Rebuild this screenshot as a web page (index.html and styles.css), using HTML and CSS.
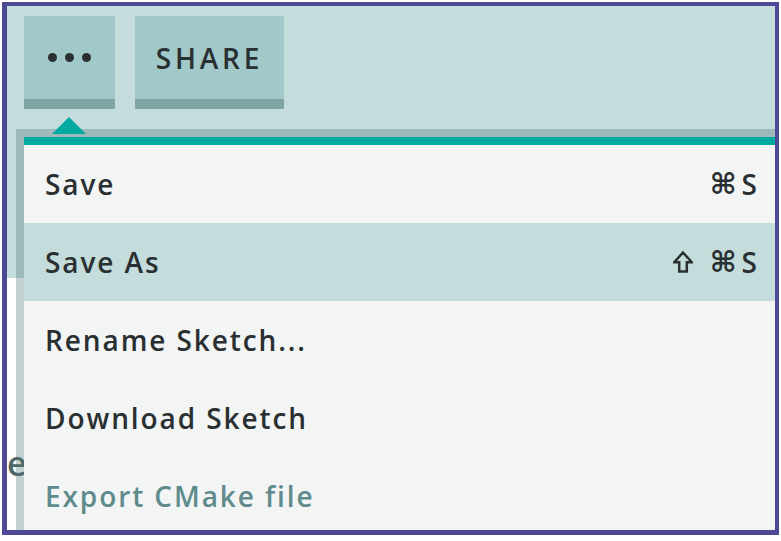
FILE: index.html
```html
<!DOCTYPE html>
<html lang="en">
<head>
<meta charset="utf-8">
<title>Sketch menu</title>
<link rel="stylesheet" href="styles.css">
</head>
<body>
<div class="frame">
  <div class="app">
    <div class="toolbar">
      <button class="tb-btn tb-more" aria-label="More">
        <span class="dot"></span><span class="dot"></span><span class="dot"></span>
      </button>
      <button class="tb-btn tb-share">SHARE</button>
    </div>
    <div class="editor">
      <span class="editor-text">e</span>
    </div>

    <span class="caret"></span>
    <div class="menu">
      <ul class="menu-list">
        <li class="menu-item"><span class="label">Save</span><span class="keys"><span class="key key-cmd">⌘</span><span class="key">S</span></span></li>
        <li class="menu-item is-active"><span class="label">Save As</span><span class="keys"><svg class="key-shift" width="20" height="22" viewBox="0 0 20 22" aria-label="Shift"><path d="M10 1.5 L18.8 11.2 H13.8 V20.6 H6.2 V11.2 H1.2 Z" fill="none" stroke="#2a3032" stroke-width="2.5" stroke-linejoin="miter"/></svg><span class="key key-cmd">⌘</span><span class="key">S</span></span></li>
        <li class="menu-item"><span class="label">Rename Sketch...</span></li>
        <li class="menu-item"><span class="label">Download Sketch</span></li>
        <li class="menu-item is-disabled"><span class="label">Export CMake file</span></li>
      </ul>
    </div>
  </div>
</div>
</body>
</html>
```

FILE: styles.css
```css
* { box-sizing: border-box; }

html, body {
  margin: 0;
  padding: 0;
  background: #ffffff;
}

body {
  font-family: "Open Sans", "DejaVu Sans", sans-serif;
}

.frame {
  margin: 2px 2px 6px 2px;
  width: 777px;
  height: 533px;
  border: 4px solid #4e4995;
  border-left-width: 5px;
  border-bottom-width: 5px;
  overflow: hidden;
}

.app {
  position: relative;
  height: 100%;
  display: flex;
  flex-direction: column;
  overflow: hidden;
}

.toolbar {
  height: 272px;
  flex: none;
  background: #c4dcdc;
  display: flex;
  align-items: flex-start;
  gap: 20px;
  padding: 10px 0 0 17px;
}

.tb-btn {
  font: inherit;
  margin: 0;
  height: 93px;
  border: 0;
  border-bottom: 10px solid #80a4a4;
  background: #a2c9c9;
  display: flex;
  align-items: center;
  justify-content: center;
  padding: 0;
  color: #2a3032;
}

.tb-more {
  width: 91px;
  gap: 8px;
}

.dot {
  width: 9px;
  height: 9px;
  border-radius: 50%;
  background: #2a3032;
}

.tb-share {
  width: 149px;
  font-size: 28px;
  letter-spacing: 3.8px;
  font-weight: 600;
  padding: 0;
}

.editor {
  flex: 1;
  background: #ffffff;
  padding-top: 165px;
}

.editor-text {
  display: block;
  margin-left: 0;
  font-size: 34px;
  font-weight: 600;
  line-height: 40px;
  color: #4d6565;
}

.caret {
  position: absolute;
  left: 45px;
  top: 111px;
  width: 0;
  height: 0;
  border-left: 17px solid transparent;
  border-right: 17px solid transparent;
  border-bottom: 17px solid #00aaa0;
  z-index: 2;
}

.menu {
  position: absolute;
  left: 9px;
  top: 123px;
  right: 0;
  border-left: 8px solid rgba(80, 115, 115, 0.33);
  border-top: 8px solid rgba(80, 115, 115, 0.33);
  background-clip: padding-box;
  z-index: 1;
}

.menu-list {
  list-style: none;
  margin: 0;
  padding: 0;
  border-top: 8px solid #00aaa0;
  background: #f3f5f5;
}

.menu-item {
  height: 78px;
  display: flex;
  align-items: center;
  justify-content: space-between;
  padding: 0 18px 0 21px;
  font-size: 28px;
  font-weight: 600;
  letter-spacing: 1.9px;
  color: #2a3032;
}

.menu-item.is-active {
  background: #c4dcdc;
}

.menu-item.is-disabled {
  color: #5f8b8c;
}

.keys {
  display: flex;
  align-items: center;
  gap: 5px;
  letter-spacing: 0;
}

.key-cmd {
  font-family: "DejaVu Sans", sans-serif;
  font-weight: 700;
  font-size: 29px;
  line-height: 1;
}

.key-shift {
  display: block;
  margin-right: 12px;
}
```
